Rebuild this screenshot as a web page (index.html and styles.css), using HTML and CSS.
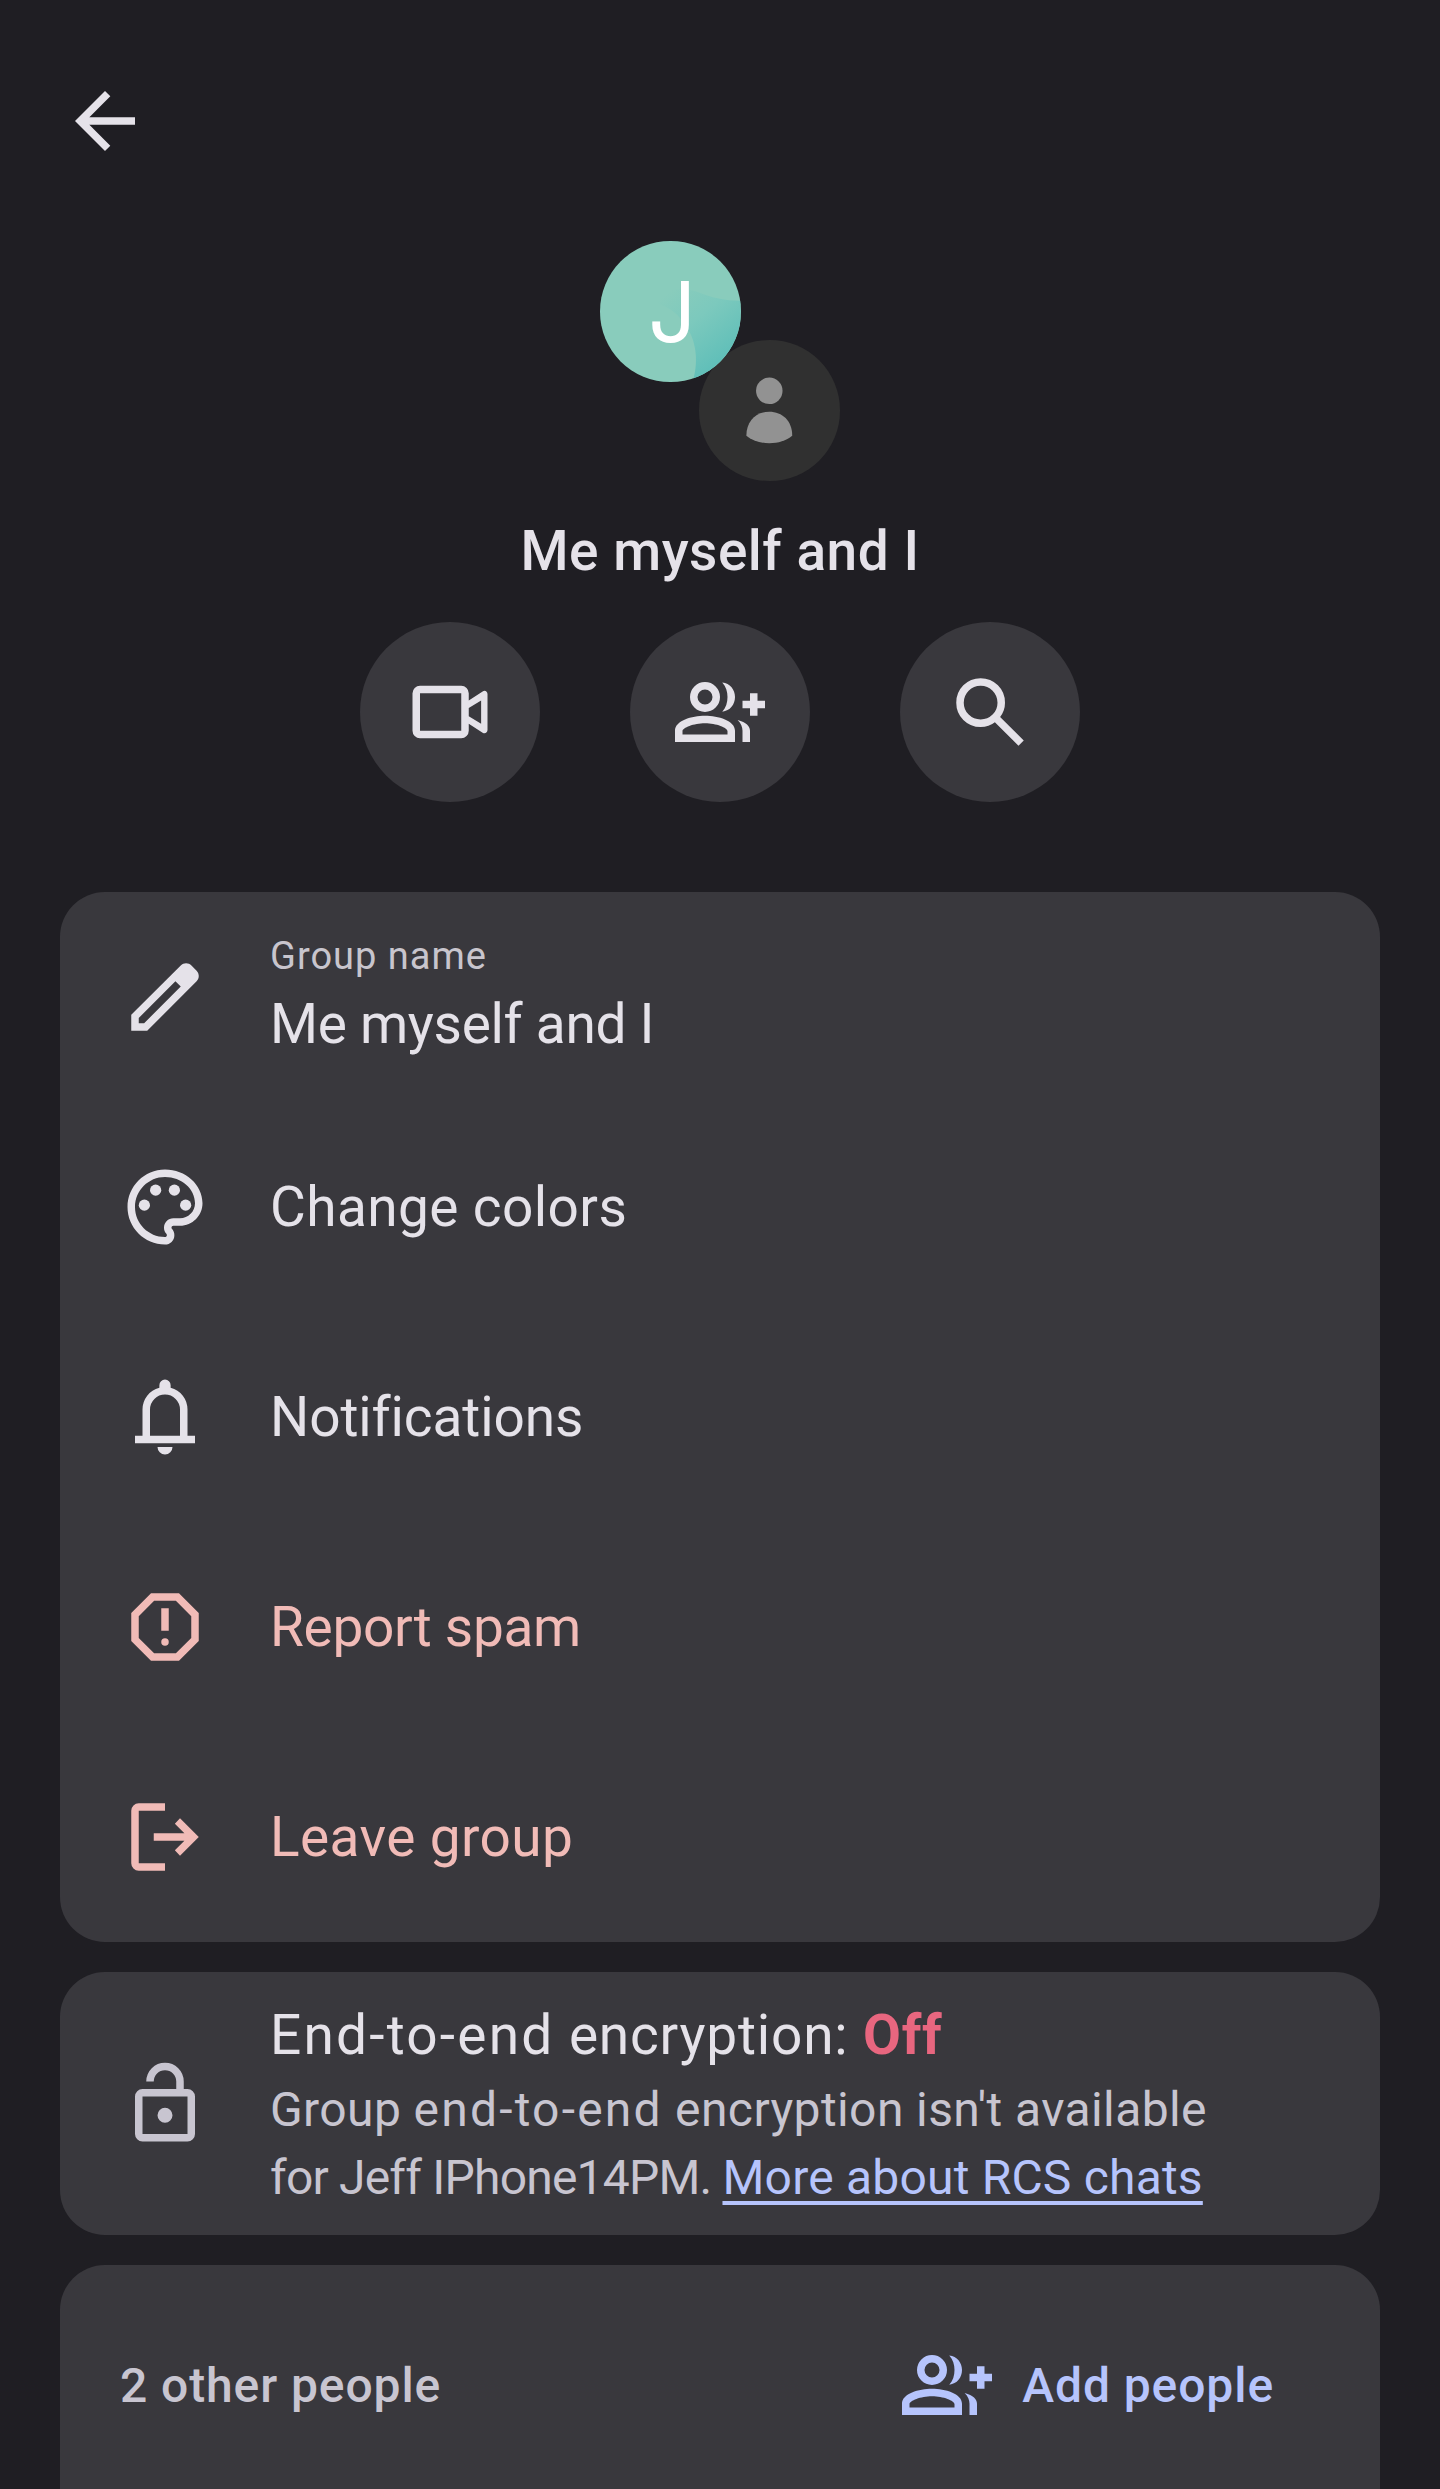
FILE: index.html
```html
<!DOCTYPE html>
<html lang="en">
<head>
    <meta charset="UTF-8">
    <meta name="viewport" content="width=device-width, initial-scale=1.0">
    <title>Group details</title>
    <link rel="stylesheet" href="styles.css">
</head>
<body>
    <!-- Shared icon, used in the actions and in the people list -->
    <svg class="defs" width="0" height="0">
        <symbol id="group-add" viewBox="0 0 24 24">
            <path fill-rule="evenodd" d="M8 4a4 4 0 1 0 0 8 4 4 0 0 0 0-8zm0 2a2 2 0 1 1 0 4 2 2 0 0 1 0-4z"/>
            <path d="M12.6 4.1C14.7 4.3 16 6 16 8s-1.3 3.7-3.4 3.9C13.6 10.8 14 9.5 14 8s-.4-2.8-1.4-3.9z"/>
            <path fill-rule="evenodd" d="M0 20v-3c0-2.7 4.5-4 8-4s8 1.3 8 4v3H0zm2-2h12v-.9c0-.9-3-2.1-6-2.1s-6 1.2-6 2.1v.9z"/>
            <path d="M16.7 14.1C19 14.7 20 15.7 20 17v3h-2v-3c0-1.100-.4-2-1.300-2.900z"/>
            <path d="M20 7h2v2h2v2h-2v2h-2v-2h-2V9h2z"/>
        </symbol>
    </svg>

    <header class="topbar">
        <svg class="icon" viewBox="0 0 24 24"><path d="M20 11H7.83l5.590-5.590L12 4l-8 8 8 8 1.410-1.410L7.830 13H20v-2z"/></svg>
    </header>

    <section class="profile">
        <div class="avatars">
            <div class="avatar avatar-letter">
                <svg class="avatar-bg" viewBox="0 0 141 141">
                    <defs>
                        <linearGradient id="teal" x1="0.15" y1="0.1" x2="0.8" y2="0.9">
                            <stop offset="0" stop-color="#89ccbc"/>
                            <stop offset="0.4" stop-color="#7cc9bd"/>
                            <stop offset="1" stop-color="#5bbdb8"/>
                        </linearGradient>
                    </defs>
                    <path fill="url(#teal)" d="M48 60C60 62 74 69 80 77C96 94 100 118 93 141H141V60C125 60 112 57 100 52C80 44 60 48 48 60z"/>
                </svg>
                <span class="letter">J</span>
            </div>
            <div class="avatar avatar-person">
                <svg viewBox="0 0 141 141" fill="#929292">
                    <circle cx="70.5" cy="51" r="13.3"/>
                    <path d="M47.500 96C47.500 81 57.500 72 70.500 72S93.500 81 93.500 96C87.500 101 79.500 103.500 70.500 103.500S53.500 101 47.500 96z"/>
                </svg>
            </div>
        </div>
        <h1>Me myself and I</h1>
        <div class="actions">
            <button type="button" class="action">
                <svg class="icon" viewBox="0 0 24 24"><path fill-rule="evenodd" d="M4 5h11a2 2 0 0 1 2 2v1.900l3.700-2.400c.6-.4 1.300 0 1.300.7v9.600c0 .7-.7 1.100-1.300.7L17 15.100V17a2 2 0 0 1-2 2H4a2 2 0 0 1-2-2V7a2 2 0 0 1 2-2zm0 2v10h11V7H4zm13 3.900v2.200l3.300 2V8.900z"/></svg>
            </button>
            <button type="button" class="action">
                <svg class="icon"><use href="#group-add"/></svg>
            </button>
            <button type="button" class="action">
                <svg class="icon" viewBox="0 -960 960 960"><path d="M784-120 532-372q-30 24-69 38t-83 14q-109 0-184.500-75.500T120-580q0-109 75.500-184.500T380-840q109 0 184.500 75.500T640-580q0 44-14 83t-38 69l252 252-56 56ZM380-400q75 0 127.500-52.500T560-580q0-75-52.500-127.500T380-760q-75 0-127.500 52.500T200-580q0 75 52.500 127.500T380-400Z"/></svg>
            </button>
        </div>
    </section>

    <main class="cards">
        <ul class="card menu">
            <li class="row">
                <svg class="icon" viewBox="0 -960 960 960"><path d="M200-200h57l391-391-57-57-391 391v57Zm-80 80v-170l528-527q12-11 26.500-17t30.500-6q16 0 31 6t26 18l55 56q12 11 17.500 26t5.500 30q0 16-5.500 30.500T817-647L290-120H120Z"/></svg>
                <div>
                    <div class="label">Group name</div>
                    <div class="value tight">Me myself and I</div>
                </div>
            </li>
            <li class="row">
                <svg class="icon" viewBox="0 0 24 24">
                    <path d="M12 22C6.490 22 2 17.510 2 12S6.490 2 12 2s10 4.040 10 9c0 3.310-2.690 6-6 6h-1.770c-.28 0-.5.22-.5.5 0 .12.05.23.13.33.41.47.64 1.060.64 1.670 0 1.380-1.120 2.500-2.500 2.500zm0-18c-4.410 0-8 3.590-8 8s3.590 8 8 8c.28 0 .5-.22.5-.5 0-.16-.08-.28-.14-.35-.41-.46-.63-1.050-.63-1.650 0-1.380 1.120-2.500 2.500-2.500H16c2.210 0 4-1.790 4-4 0-3.860-3.590-7-8-7z"/>
                    <circle cx="6.5" cy="11.5" r="1.5"/>
                    <circle cx="9.5" cy="7.5" r="1.5"/>
                    <circle cx="14.5" cy="7.5" r="1.5"/>
                    <circle cx="17.5" cy="11.5" r="1.5"/>
                </svg>
                <div class="value wide">Change colors</div>
            </li>
            <li class="row">
                <svg class="icon" viewBox="0 -960 960 960"><path d="M160-200v-80h80v-280q0-83 50-147.500T420-792v-28q0-25 17.500-42.500T480-880q25 0 42.500 17.500T540-820v28q80 20 130 84.500T720-560v280h80v80H160Zm320 120q-33 0-56.500-23.500T400-160h160q0 33-23.500 56.500T480-80ZM320-280h320v-280q0-66-47-113t-113-47q-66 0-113 47t-47 113v280Z"/></svg>
                <div class="value">Notifications</div>
            </li>
            <li class="row danger">
                <svg class="icon" viewBox="0 0 24 24">
                    <path d="M15.730 3H8.270L3 8.270v7.460L8.270 21h7.460L21 15.730V8.270L15.730 3zM19 14.900L14.900 19H9.100L5 14.900V9.100L9.100 5h5.800L19 9.100v5.800z"/>
                    <circle cx="12" cy="16" r="1"/>
                    <path d="M11 7h2v6h-2z"/>
                </svg>
                <div class="value tight">Report spam</div>
            </li>
            <li class="row danger">
                <svg class="icon" viewBox="0 -960 960 960"><path d="M200-120q-33 0-56.500-23.500T120-200v-560q0-33 23.500-56.500T200-840h280v80H200v560h280v80H200Zm440-160-55-58 102-102H360v-80h327L585-622l55-58 200 200-200 200Z"/></svg>
                <div class="value wide">Leave group</div>
            </li>
        </ul>

        <section class="card encryption">
            <svg class="icon" viewBox="0 -960 960 960"><path d="M240-80q-33 0-56.500-23.500T160-160v-400q0-33 23.500-56.500T240-640h360v-80q0-50-35-85t-85-35q-50 0-85 35t-35 85h-80q0-83 58.500-141.500T480-920q83 0 141.500 58.500T680-720v80h40q33 0 56.500 23.500T800-560v400q0 33-23.500 56.500T720-80H240Zm0-80h480v-400H240v400Zm240-120q33 0 56.500-23.500T560-360q0-33-23.500-56.500T480-440q-33 0-56.500 23.500T400-360q0 33 23.500 56.500T480-280Z"/></svg>
            <div>
                <h2><span class="e2e">End-to-end</span> encryption: <strong>Off</strong></h2>
                <p>Group <span class="e2e">end-to-end</span> encryption isn't available<br><span class="device">for Jeff IPhone14PM. </span><a href="#">More about RCS chats</a></p>
            </div>
        </section>

        <section class="card people">
            <div class="people-header">
                <span class="count">2 other people</span>
                <button type="button" class="add">
                    <svg class="icon"><use href="#group-add"/></svg>
                    <span>Add people</span>
                </button>
            </div>
        </section>
    </main>
</body>
</html>
```
FILE: styles.css
```css
* {
    box-sizing: border-box;
}

body {
    margin: 0;
    height: 2489px;
    overflow: hidden;
    background-color: #1f1e23;
    color: #e5e2e9;
    font-family: Roboto, "Liberation Sans", sans-serif;
}

h1, h2, p, ul {
    margin: 0;
    padding: 0;
}

button {
    border: none;
    padding: 0;
    background: none;
    color: inherit;
    font: inherit;
    cursor: pointer;
}

.defs {
    position: absolute;
}

.icon {
    display: block;
    width: 90px;
    height: 90px;
    flex-shrink: 0;
    fill: currentColor;
}

.topbar {
    padding: 76px 60px 0;
}

/* Profile */
.profile {
    display: flex;
    flex-direction: column;
    align-items: center;
    margin-top: 75px;
}

.avatars {
    position: relative;
    width: 240px;
    height: 240px;
}

.avatar {
    position: absolute;
    width: 140.6px;
    height: 140.6px;
    border-radius: 50%;
    overflow: hidden;
}

/* The letter avatar overlaps the corner of the second one */
.avatar-letter {
    top: 0;
    left: 0;
    z-index: 1;
    display: flex;
    align-items: center;
    justify-content: center;
    background-color: #89ccbc;
}

.avatar-bg {
    position: absolute;
    inset: 0;
}

.letter {
    z-index: 1;
    padding-left: 4px;
    color: #fff;
    font-family: Inter, Roboto, sans-serif;
    font-size: 84px;
    line-height: 141px;
}

.avatar-person {
    right: 0;
    bottom: 0;
    background-color: #303030;
}

h1 {
    margin-top: 30px;
    font-size: 55px;
    font-weight: 500;
    line-height: 80px;
    letter-spacing: 0.5px;
}

.actions {
    display: flex;
    gap: 90px;
    margin-top: 31px;
}

.action {
    display: flex;
    align-items: center;
    justify-content: center;
    width: 180px;
    height: 180px;
    border-radius: 50%;
    background-color: #39383d;
}

/* Cards */
.cards {
    display: flex;
    flex-direction: column;
    gap: 30px;
    padding: 90px 60px 0;
}

.card {
    border-radius: 45px;
    background-color: #39383d;
}

.menu {
    list-style: none;
}

.row {
    display: flex;
    align-items: center;
    gap: 60px;
    height: 210px;
    padding: 0 60px;
}

.label {
    color: #c8c5cd;
    font-size: 38px;
    line-height: 54px;
    letter-spacing: 1px;
}

.value {
    font-size: 55px;
    line-height: 82px;
    letter-spacing: -0.1px;
}

.value.tight {
    letter-spacing: -0.3px;
}

.value.wide {
    letter-spacing: 0.4px;
}

.danger {
    color: #f1bbb7;
}

.encryption {
    display: flex;
    align-items: center;
    gap: 60px;
    height: 263px;
    padding: 0 60px;
    color: #c8c5d0;
}

.encryption h2 {
    color: #e5e2e9;
    font-size: 55px;
    font-weight: 400;
    line-height: 81px;
    letter-spacing: 0.8px;
}

.encryption strong {
    color: #e8667f;
    font-weight: 700;
}

.encryption p {
    font-size: 48px;
    line-height: 68px;
    letter-spacing: 0.4px;
    white-space: nowrap;
}

.encryption .e2e {
    letter-spacing: 2.2px;
}

.encryption .device {
    letter-spacing: -0.8px;
}

.encryption a {
    color: #b6c4fc;
    letter-spacing: 0.2px;
    text-decoration: underline;
    text-decoration-thickness: 4px;
    text-underline-offset: 7px;
    text-decoration-skip-ink: none;
}

.people {
    height: 320px;
}

.people-header {
    display: flex;
    align-items: center;
    justify-content: space-between;
    height: 240px;
    padding: 0 106px 0 60px;
    font-size: 48px;
    font-weight: 500;
    letter-spacing: 0.9px;
}

.count {
    color: #c8c5d0;
}

.add {
    display: flex;
    align-items: center;
    gap: 30px;
    color: #b6c4fc;
    letter-spacing: 0.9px;
}
```
